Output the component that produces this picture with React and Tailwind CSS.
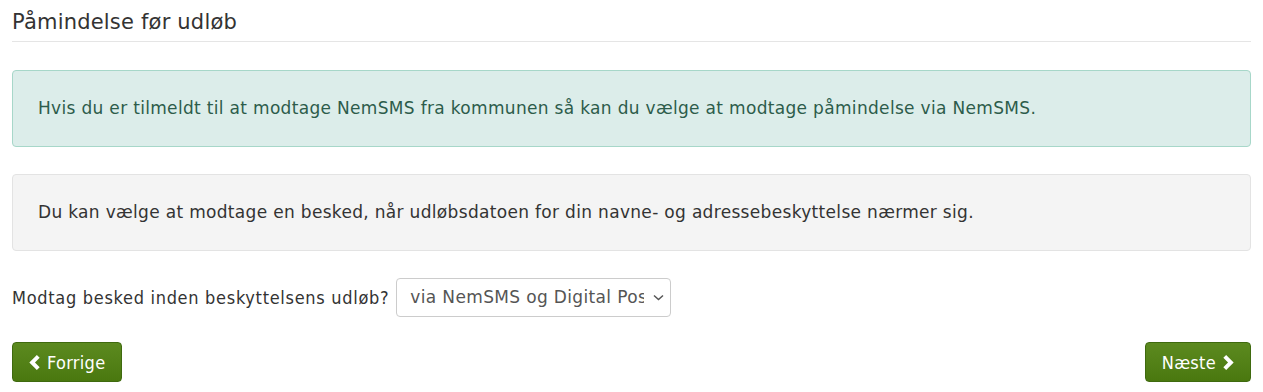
const verdana = "font-['DejaVu_Sans',Verdana,sans-serif]"
const tahoma = "font-['DejaVu_Sans_Condensed','DejaVu_Sans',sans-serif]"

function Chevron({ dir }) {
  // glyphicon-style solid chevron
  const points = dir === 'left' ? '8,0 11,3 6,8 11,13 8,16 0,8' : '3,0 0,3 5,8 0,13 3,16 11,8'
  return (
    <svg width="11" height="15" viewBox="0 0 11 16" fill="currentColor">
      <polygon points={points} />
    </svg>
  )
}

function NavButton({ children }) {
  return (
    <button
      type="button"
      className={`flex h-10 items-center gap-[7px] rounded-[4px] border border-[#3f6a0f] bg-gradient-to-b from-[#5c8a1f] to-[#4a780f] px-[16px] text-[18px] tracking-[0.3px] text-white ${tahoma}`}
    >
      {children}
    </button>
  )
}

export default function App() {
  return (
    <div className="min-h-[392px] bg-white px-3 pt-[10px] text-[#333]">
      {/* Heading */}
      <h2 className={`border-b border-[#e5e5e5] pb-[6px] text-[21px] leading-[25px] tracking-[0.2px] text-[#333] ${verdana}`}>
        Påmindelse før udløb
      </h2>

      {/* Info alert */}
      <div className={`mt-[28px] flex h-[77px] items-center rounded-[4px] border border-[#a7d7c9] bg-[#dcedea] px-[25px] text-[17px] tracking-[0.32px] text-[#2d5c4b] ${verdana}`}>
        Hvis du er tilmeldt til at modtage NemSMS fra kommunen så kan du vælge at modtage påmindelse via NemSMS.
      </div>

      {/* Description */}
      <div className={`mt-[27px] flex h-[77px] items-center rounded-[4px] border border-[#e3e3e3] bg-[#f4f4f4] px-[25px] text-[17px] tracking-[0.32px] text-[#333] ${verdana}`}>
        Du kan vælge at modtage en besked, når udløbsdatoen for din navne- og adressebeskyttelse nærmer sig.
      </div>

      {/* Select row */}
      <div className="mt-[27px] flex items-center gap-[7px]">
        <label className={`text-[18px] tracking-[0.7px] text-[#333] ${tahoma}`}>Modtag besked inden beskyttelsens udløb?</label>
        <div className="relative h-[39px] w-[275px]">
          <select
            className={`h-full w-full appearance-none rounded-[4px] border border-[#ccc] bg-white pl-[13px] pr-[26px] text-[17px] tracking-[0.35px] text-[#555] ${verdana}`}
            defaultValue="both"
          >
            <option value="both">via NemSMS og Digital Post</option>
          </select>
          <svg
            className="pointer-events-none absolute right-[7px] top-[16px]"
            width="11"
            height="7"
            viewBox="0 0 11 7"
            fill="none"
            stroke="#555"
            strokeWidth="1.5"
          >
            <path d="M1 1.5l4.5 4 4.5-4" />
          </svg>
        </div>
      </div>

      {/* Navigation */}
      <div className="mt-[25px] flex items-center justify-between">
        <NavButton>
          <Chevron dir="left" />
          Forrige
        </NavButton>
        <NavButton>
          Næste
          <Chevron dir="right" />
        </NavButton>
      </div>
    </div>
  )
}
